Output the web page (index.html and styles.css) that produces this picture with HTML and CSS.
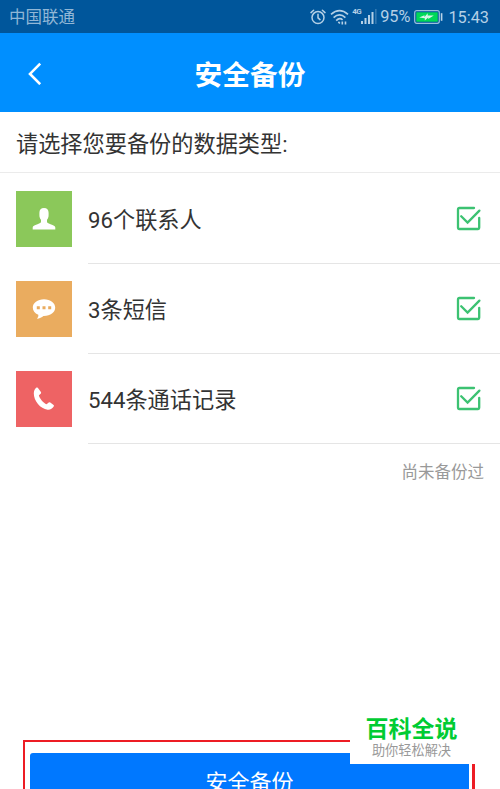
FILE: index.html
```html
<!DOCTYPE html>
<html lang="zh-CN">
<head>
    <meta charset="UTF-8">
    <meta name="viewport" content="width=device-width, initial-scale=1.0">
    <title>安全备份</title>
    <link rel="stylesheet" href="styles.css">
</head>
<body>
    <div class="screen">
        <div class="status-bar">
            <span class="carrier">中国联通</span>
            <div class="status-icons">
                <svg class="alarm" width="16" height="16" viewBox="0 0 16 16" fill="none" stroke="currentColor" stroke-width="1.5" stroke-linecap="round">
                    <circle cx="8" cy="8.6" r="6"/>
                    <path d="M8 5.2V8.8L10 10.6M1 3.6L3.6 1.2M15 3.6L12.4 1.2"/>
                </svg>
                <svg class="wifi" width="19" height="16" viewBox="0 0 19 16" fill="none" stroke="currentColor" stroke-width="1.7">
                    <path d="M1 5.3Q9.5 -2 18 5.3M3.6 8.6Q9.5 3.3 15.4 8.6M6.2 11.6Q9.5 8.2 12.6 10.8"/>
                    <path d="M8.4 12.8L9.8 14.6M12.3 12.6V15.6M15.5 12.6V15.6" stroke-width="1.6"/>
                </svg>
                <div class="signal">
                    <span class="network">4G</span>
                    <svg width="16" height="15" viewBox="0 0 16 15" fill="currentColor">
                        <path d="M0 12h2v3H0zM3.5 9h2v6h-2zM7 6h2v9H7zM10.5 3h2v12h-2z"/>
                        <path d="M14.2 0h1.3v15h-1.3z" opacity=".35"/>
                    </svg>
                </div>
                <span class="percent">95%</span>
                <svg class="battery" width="29" height="14" viewBox="0 0 29 14">
                    <rect x=".7" y=".7" width="24.6" height="12.6" rx="2" fill="none" stroke="#9cc0de" stroke-width="1.2"/>
                    <rect x="2.3" y="2.3" width="21.4" height="9.4" fill="#00d958"/>
                    <path d="M5.2 7.6L10.5 5.2V7L13.7 3.2V5.6H19.8L14.2 9V7.4L10.8 10.4V8.2Z" fill="#d9f5e8"/>
                    <path d="M27.6 3.2v7.6" stroke="#b9d3e8" stroke-width="1.6"/>
                </svg>
                <span class="time">15:43</span>
            </div>
        </div>

        <div class="header">
            <svg class="back" width="14" height="23" viewBox="0 0 14 23" fill="none" stroke="#fff" stroke-width="2.6">
                <path d="M12.2 1.6L2 11.9L12.2 22.2"/>
            </svg>
            <h1>安全备份</h1>
        </div>

        <div class="prompt">请选择您要备份的数据类型:</div>

        <div class="list">
            <div class="item">
                <div class="tile green">
                    <svg width="24" height="22" viewBox="0 0 24 22" fill="#fff">
                        <path d="M12 0C9 0 7.4 1.9 7.4 4.8V7.2C7.4 9.3 8.1 10.6 9 11.7V13.8C9 14.8 7.9 15.4 5.5 16.2C2.5 17.2 .7 18 .7 19.5V21.4H23.3V19.5C23.3 18 21.5 17.2 18.5 16.2C16.1 15.4 15 14.8 15 13.8V11.7C15.9 10.6 16.6 9.3 16.6 7.2V4.8C16.6 1.9 15 0 12 0Z"/>
                    </svg>
                </div>
                <div class="item-body">
                    <span>96个联系人</span>
                    <svg class="check" width="26" height="26" viewBox="0 0 26 26"><path d="M18 2H3.4Q2 2 2 3.4V21.6Q2 23 3.4 23H21.8Q23.2 23 23.2 21.6V12"/><path d="M5.2 10.2L11.6 16.6L23.4 4.6"/></svg>
                </div>
            </div>
            <div class="item">
                <div class="tile orange">
                    <svg width="24" height="22" viewBox="0 0 24 22">
                        <path d="M12 1.2C5.6 1.2 .8 4.8 .8 9.6C.8 12.7 2.7 15.3 6.3 16.8C6.6 18 6.1 19.4 4.9 20.8C7.6 20.6 9.8 19.5 11.4 18.1C18.2 18.3 23.2 14.6 23.2 9.6C23.2 4.8 18.4 1.2 12 1.2Z" fill="#fff"/>
                        <path d="M4.8 8.3h3v3h-3zM10.5 8.3h3v3h-3zM16.2 8.3h3v3h-3z" fill="#eaac5f"/>
                    </svg>
                </div>
                <div class="item-body">
                    <span>3条短信</span>
                    <svg class="check" width="26" height="26" viewBox="0 0 26 26"><path d="M18 2H3.4Q2 2 2 3.4V21.6Q2 23 3.4 23H21.8Q23.2 23 23.2 21.6V12"/><path d="M5.2 10.2L11.6 16.6L23.4 4.6"/></svg>
                </div>
            </div>
            <div class="item">
                <div class="tile red">
                    <svg width="24" height="24" viewBox="0 0 24 24" fill="#fff">
                        <path d="M5.8 .8L8.9 5.1Q9.5 6 8.7 6.7L6.9 8.2C7.3 11.2 11.5 16 14.6 17.2L16.7 15.6Q17.5 15 18.3 15.6L21.6 18Q22.3 18.6 21.7 19.4C20.4 21.4 18.4 23 15.6 22.7C8.4 21.8 1.7 13.8 1.8 6.2C1.9 3.6 3 1.7 4.5 .6Q5.3 .1 5.8 .8Z"/>
                    </svg>
                </div>
                <div class="item-body">
                    <span>544条通话记录</span>
                    <svg class="check" width="26" height="26" viewBox="0 0 26 26"><path d="M18 2H3.4Q2 2 2 3.4V21.6Q2 23 3.4 23H21.8Q23.2 23 23.2 21.6V12"/><path d="M5.2 10.2L11.6 16.6L23.4 4.6"/></svg>
                </div>
            </div>
        </div>

        <div class="note">尚未备份过</div>

        <div class="footer">
            <button type="button" class="btn">安全备份</button>
        </div>

        <div class="watermark">
            <strong>百科全说</strong>
            <span>助你轻松解决</span>
        </div>
    </div>
</body>
</html>
```
FILE: styles.css
```css
* {
    box-sizing: border-box;
}

body {
    margin: 0;
    background-color: #fff;
    color: #333;
    font-family: Roboto, 'Noto Sans CJK SC', sans-serif;
}

.screen {
    position: relative;
    display: flex;
    flex-direction: column;
    width: 500px;
    height: 789px;
    overflow: hidden;
}

.status-bar {
    display: flex;
    flex: none;
    align-items: center;
    justify-content: space-between;
    height: 33px;
    padding: 0 11px 0 9px;
    background-color: #00569b;
    color: #b4d0e6;
    font-size: 16.3px;
    line-height: 32px;
}

.carrier {
    padding-top: 3px;
    font-size: 16.5px;
    color: #91b7d6;
}

.status-icons {
    display: flex;
    align-items: center;
}

.wifi {
    margin-left: 4px;
}

.signal {
    display: flex;
    align-items: center;
    margin-left: 3px;
}

.network {
    width: 9px;
    margin-top: -9px;
    font-size: 8px;
    font-weight: 700;
    line-height: 10px;
    letter-spacing: -0.5px;
}

.percent {
    margin-left: 3px;
}

.battery {
    margin-left: 4px;
}

.time {
    margin-left: 5px;
    padding-top: 2px;
}

.header {
    display: flex;
    flex: none;
    align-items: center;
    height: 79px;
    padding: 2px 28px 0;
    background-color: #008fff;
    color: #fff;
}

.header h1 {
    flex: 1;
    margin: 0 14px 0 0;
    padding-top: 4px;
    text-align: center;
    font-size: 27.7px;
    font-weight: 700;
    line-height: 40px;
}

.prompt {
    flex: none;
    height: 61px;
    padding: 2px 16px 0;
    border-bottom: 1px solid #ebebeb;
    font-size: 22.2px;
    line-height: 60px;
}

.item {
    display: flex;
    align-items: center;
    height: 90px;
    padding-left: 16px;
}

.list {
    padding-top: 1px;
}

.tile {
    display: flex;
    align-items: center;
    justify-content: center;
    width: 56px;
    height: 56px;
    margin: -1px 16px 0 0;
}

.green {
    background-color: #8bc85a;
}

.orange {
    background-color: #eaac5f;
}

.red {
    background-color: #ee6364;
}

.item-body {
    display: flex;
    flex: 1;
    align-items: center;
    justify-content: space-between;
    height: 90px;
    padding-right: 18px;
    border-bottom: 1px solid #e5e5e5;
    font-size: 22.2px;
}

.item-body span {
    padding-bottom: 2px;
}

.check {
    fill: none;
    stroke: #3cc272;
    stroke-width: 2.3;
    stroke-linecap: round;
}

.note {
    padding: 17px 16px 0 0;
    color: #999;
    text-align: right;
    font-size: 16.5px;
    line-height: 24px;
}

.footer {
    flex: none;
    height: 70px;
    margin: auto 25px -21px 23px;
    padding: 11px 3px 0 5px;
    border: 2px solid #ed1c24;
    border-right-width: 3px;
}

.btn {
    display: block;
    width: 100%;
    height: 60px;
    padding: 0;
    border: none;
    border-radius: 3px;
    background-color: #0078ff;
    color: #fff;
    font-family: inherit;
    font-size: 22px;
    line-height: 56px;
}

/* sits over the corner of the footer */
.watermark {
    position: absolute;
    right: 25px;
    bottom: 25px;
    display: flex;
    flex-direction: column;
    align-items: center;
    width: 125px;
    height: 54px;
    padding: 3px 2px 0 0;
    background-color: #fff;
}

.watermark strong {
    color: #00cc33;
    font-size: 23px;
    font-weight: 700;
    line-height: 34px;
}

.watermark span {
    margin-top: -3px;
    color: #999;
    font-size: 13.2px;
    line-height: 14px;
}
```
